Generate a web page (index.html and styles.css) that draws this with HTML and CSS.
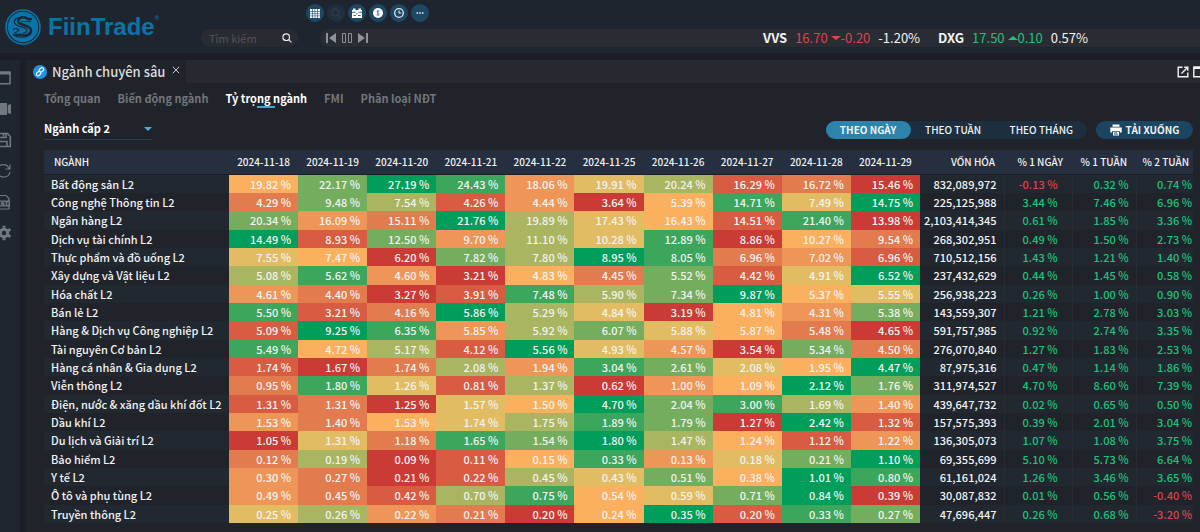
FILE: index.html
```html
<!DOCTYPE html>
<html lang="vi">
<head>
<meta charset="utf-8">
<title>FiinTrade – Ngành chuyên sâu</title>
<link rel="stylesheet" href="styles.css">
</head>
<body>
<header class="topbar">
  <a class="logo" href="#" aria-label="FiinTrade">
    <svg class="logo-mark" viewBox="0 0 36 36" aria-hidden="true">
      <circle cx="18" cy="18" r="17" fill="none" stroke="#0a73a8" stroke-width="1.6"/>
      <circle cx="18" cy="18" r="15.2" fill="#0a73a8"/>
      <g fill="none" stroke="#1b2735" stroke-linecap="round" stroke-linejoin="round">
        <path stroke-width="2.4" d="M26 10c-3 1.500-5-2.500-9-1.800-3.800.7-5 4-2.500 6 2.500 2 8 2.300 10.500 4.800 2.700 3 0 6.500-3.800 7.300-4 .8-7-1.800-10.200-.3"/>
        <path stroke-width="1.200" d="M14.500 8.500c-4.500 0-6.500 4-4 6.800 2.600 2.700 8 2.200 10.700 4.500 2 2-.2 4-2.700 4.200M8.500 20.500c2-1.800 4.500-1 5.300.8-1.500 1.800-4 1.500-5.300 4.700 4.500 3 12.500 3.500 17.500-1.500M17 12.500h8.500"/>
      </g>
    </svg>
    <span class="logo-text">FiinTrade</span><span class="logo-reg">®</span>
  </a>
  <div class="topbar-main">
    <nav class="tools" aria-label="Công cụ">
      <button class="tool" aria-label="Bảng giá"><svg viewBox="0 0 18 18"><path fill="#fff" d="M4 5h10v9H4z"/><path stroke="#1d4763" stroke-width=".6" d="M4 7.500h10M4 9.700h10M4 11.900h10M6.500 5v9M9 5v9M11.500 5v9"/></svg></button>
      <button class="tool tool-off" aria-label="Tra cứu"><svg viewBox="0 0 18 18"><circle cx="8.500" cy="8.500" r="3.500" fill="none" stroke="#2f3c4a" stroke-width="1.500"/><path stroke="#2f3c4a" stroke-width="1.500" d="M11 11l3 3"/></svg></button>
      <button class="tool" aria-label="Lịch"><svg viewBox="0 0 18 18"><path fill="#fff" d="M4 6h1V4.500h2.500V6h3V4.500H13V6h1v8H4z"/><path stroke="#1d4763" stroke-width=".8" d="M4 8.300h3.500M10.500 8.300H14M5.500 11.500h2.500M10 11.500h2.500M9 9v1.500"/></svg></button>
      <button class="tool" aria-label="Tiền tệ"><svg viewBox="0 0 18 18"><circle cx="9" cy="9" r="5" fill="#fff"/><path fill="none" stroke="#6d8494" d="M10.500 7.200c-3-1-3.500 1-1.500 1.800s1 2.800-1.500 1.600M9 6v6"/></svg></button>
      <button class="tool" aria-label="Lịch sử"><svg viewBox="0 0 18 18"><circle cx="9" cy="9" r="4.300" fill="none" stroke="#dfe8ee" stroke-width="1.300"/><path fill="none" stroke="#dfe8ee" stroke-width="1.100" d="M9 6.500V9h2.300"/></svg></button>
      <button class="tool" aria-label="Thêm"><svg viewBox="0 0 18 18"><path fill="#e6edf2" d="M5.500 8.300h1.600v1.500H5.500zM8.200 8.300h1.600v1.500H8.200zM10.900 8.300h1.600v1.500h-1.600z"/></svg></button>
    </nav>
    <div class="quote-row">
      <label class="search">
        <input type="search" placeholder="Tìm kiếm" aria-label="Tìm kiếm">
        <svg viewBox="0 0 10 10" aria-hidden="true"><circle cx="4.200" cy="4.200" r="3.300" fill="none" stroke="#e6e8ea" stroke-width="1.200"/><path stroke="#e6e8ea" stroke-width="1.200" d="M6.700 6.700L9.400 9.400"/></svg>
      </label>
      <div class="ticker">
        <div class="player">
          <button aria-label="Trước"><svg viewBox="0 0 10 12"><path fill="#8e9196" d="M0 1h2v10H0zM10 1v10L3 6z"/></svg></button>
          <button aria-label="Tạm dừng"><svg viewBox="0 0 10 12"><path fill="none" stroke="#8e9196" d="M.5 1.500h3v9h-3zM6.500 1.500h3v9h-3z"/></svg></button>
          <button aria-label="Sau"><svg viewBox="0 0 10 12"><path fill="#8e9196" d="M8 1h2v10H8zM0 1v10l7-5z"/></svg></button>
        </div>
        <div class="quote"><b>VVS</b><span class="down">16.70 <i class="arrow arrow-down"></i>-0.20</span><span>-1.20%</span></div>
        <div class="quote"><b>DXG</b><span class="up">17.50 <i class="arrow arrow-up"></i>0.10</span><span>0.57%</span></div>
      </div>
    </div>
  </div>
</header>

<div class="workspace">
  <aside class="sidebar">
    <button aria-label="Cửa sổ"><svg viewBox="0 0 20 20"><path fill="none" stroke="#74787e" stroke-width="1.500" d="M-5 4.200H10v11.500H-5z"/><path fill="#74787e" d="M-5 3.500H10.500v3H-5z"/></svg></button>
    <button aria-label="Video"><svg viewBox="0 0 20 20"><path fill="#74787e" d="M-5 4h12v12H-5zM7.700 6l3.300-1v10l-3.300-1z"/></svg></button>
    <button aria-label="Lưu"><svg viewBox="0 0 20 20"><path fill="none" stroke="#74787e" stroke-width="1.600" d="M-4 3.500H7.500L10.300 6.500V16.500H-4zM-1 3.500v4h7v-4M-1 16v-4.500h8V16M3.500 4v2.500"/></svg></button>
    <button aria-label="Tải lại"><svg viewBox="0 0 20 20"><path fill="none" stroke="#74787e" stroke-width="1.200" d="M-2 7C0 2.500 7 2.500 9 7.500M10 3.500V8H5.500M10 11C9 17 0 18-2 12"/></svg></button>
    <button aria-label="Xuất CSV"><svg viewBox="0 0 20 20"><path fill="none" stroke="#74787e" stroke-width="1.200" d="M-3 9V3.500H6L9 6.500V9M9 14v3H-3"/><path fill="#74787e" d="M-3 8.500h13v6H-3z"/><path fill="none" stroke="#1f2630" stroke-width=".8" d="M2.500 10H.5v3h2M5.500 10h-1.500v1.500h1.500V13H4M6.800 10l.9 3 .9-3"/></svg></button>
    <button aria-label="Cài đặt"><svg viewBox="0 0 20 20"><circle cx="4" cy="10" r="3.700" fill="none" stroke="#74787e" stroke-width="3"/><path stroke="#74787e" stroke-width="3" d="M4 2.800v2M4 15.200v2M7.900 7.700l2.500-1.400M7.900 12.300l2.500 1.400M-2.300 6.300L.2 7.700M-2.300 13.700l2.500-1.400"/></svg></button>
  </aside>

  <main class="panel">
    <div class="tabstrip">
      <div class="tab">
        <svg class="tab-icon" viewBox="0 0 14 14" aria-hidden="true"><circle cx="7" cy="7" r="7" fill="#2492e2"/><g fill="none" stroke="#fff" stroke-width="1.100"><rect x="5.900" y="3.200" width="5" height="3.400" rx="1.700" transform="rotate(-45 8.400 4.900)"/><rect x="3.100" y="6.900" width="5" height="3.400" rx="1.700" transform="rotate(-45 5.600 8.600)"/></g></svg>
        <h1>Ngành chuyên sâu</h1>
        <button class="tab-close" aria-label="Đóng"><svg viewBox="0 0 8 8"><path stroke="#c6c8cb" d="M.8.8l6.400 6.400M7.200.8L.8 7.200"/></svg></button>
      </div>
      <div class="tabstrip-actions">
        <button aria-label="Mở cửa sổ mới"><svg viewBox="0 0 12 12"><path fill="none" stroke="#f2f3f4" stroke-width="1.400" d="M5.500 1.200H1.200v9.600h9.600V6.500M4.500 7.500l6-6M7.200 1.200h3.600v3.600"/></svg></button>
        <button class="cut" aria-label="Phóng to"><svg viewBox="0 0 12 12"><path fill="none" stroke="#f2f3f4" stroke-width="1.400" d="M.8 1.200h10.400v9.600H.8z"/><path fill="#f2f3f4" d="M.5.500h11v2.500H.5z"/></svg></button>
      </div>
    </div>

    <div class="content">
      <nav class="subnav">
        <a href="#">Tổng quan</a>
        <a href="#">Biến động ngành</a>
        <a href="#" class="active" aria-current="page">Tỷ trọng ngành</a>
        <a href="#">FMI</a>
        <a href="#">Phân loại NĐT</a>
      </nav>

      <div class="filters">
        <div class="level">
          <select aria-label="Cấp ngành"><option>Ngành cấp 2</option></select>
          <i class="arrow arrow-down" aria-hidden="true"></i>
        </div>
        <div class="actions">
          <div class="segment" role="group" aria-label="Chu kỳ">
            <button class="on" aria-pressed="true">THEO NGÀY</button>
            <button aria-pressed="false">THEO TUẦN</button>
            <button aria-pressed="false">THEO THÁNG</button>
          </div>
          <button class="download">
            <svg viewBox="0 0 12 12" aria-hidden="true"><path fill="#fff" d="M2.500.5h7v2.300h-7zM.3 3.600h11.400v5H9.800V7H2.200v1.600H.3z"/><path fill="#fff" d="M3 7.700h6v3.800H3z"/><path stroke="#1c4561" stroke-width=".8" d="M4 8.900h3M4 10.200h4"/></svg>
            TẢI XUỐNG
          </button>
        </div>
      </div>

      <table class="heatmap">
        <colgroup>
          <col class="c-name"><col span="10"><col class="c-cap"><col class="c-day"><col class="c-week"><col class="c-week2">
        </colgroup>
        <thead>
          <tr>
            <th class="name" scope="col">NGÀNH</th>
            <th scope="col">2024-11-18</th><th scope="col">2024-11-19</th><th scope="col">2024-11-20</th><th scope="col">2024-11-21</th><th scope="col">2024-11-22</th>
            <th scope="col">2024-11-25</th><th scope="col">2024-11-26</th><th scope="col">2024-11-27</th><th scope="col">2024-11-28</th><th scope="col">2024-11-29</th>
            <th class="num" scope="col">VỐN HÓA</th><th class="num" scope="col">% 1 NGÀY</th><th class="num" scope="col">% 1 TUẦN</th><th class="num last" scope="col">% 2 TUẦN</th>
          </tr>
        </thead>
        <tbody id="rows"></tbody>
      </table>
    </div>
  </main>
</div>
<script src="table.js"></script>
</body>
</html>
```

FILE: styles.css
```css
* { box-sizing: border-box; }

body {
  margin: 0;
  min-height: 100vh;
  display: flex;
  flex-direction: column;
  gap: 7px;
  overflow-x: hidden;
  background: #1b1e27;
  color: #f2f3f4;
  font: 11px/16px "Noto Sans CJK SC", "Noto Sans", sans-serif;
}

button {
  padding: 0;
  border: 0;
  background: none;
  color: inherit;
  font: inherit;
  cursor: pointer;
}

svg { display: block; }
a { color: inherit; text-decoration: none; }

.up { color: #1cc37c; }
.down { color: #dc4450; }

.arrow {
  display: inline-block;
  border: 4px solid transparent;
}
.arrow-down { border-top-color: currentColor; border-bottom: 0; }
.arrow-up { border-bottom-color: currentColor; border-top: 0; }

/* Top bar */
.topbar {
  display: flex;
  height: 53px;
  padding-left: 5px;
  background: #1f252f;
}

.logo {
  display: flex;
  align-items: center;
  width: 196px;
  color: #0a73a8;
}
.logo-mark { width: 36px; height: 36px; margin-right: 7px; }
.logo-text { font: bold 24px/28px "Liberation Sans", Arial, sans-serif; }
.logo-reg { align-self: flex-start; padding-top: 14px; font: bold 6px/8px "Liberation Sans", Arial, sans-serif; }

.topbar-main {
  flex: 1;
  display: flex;
  flex-direction: column;
  gap: 7px;
  padding-top: 4px;
}

.tools { display: flex; gap: 3px; padding-left: 105px; }
.tool { width: 18px; height: 18px; border-radius: 50%; background: #1d4763; }
.tool-off { background: #1f2f3d; }

.quote-row { display: flex; gap: 22px; }

.search {
  display: flex;
  align-items: center;
  width: 97px;
  height: 18px;
  padding: 0 6px 0 8px;
  border-radius: 9px;
  background: #292b33;
}
.search input {
  flex: 1;
  min-width: 0;
  padding: 0;
  border: 0;
  outline: 0;
  background: none;
  color: #d0d2d5;
  font: inherit;
}
.search input::placeholder { color: #50545b; }
.search svg { width: 10px; height: 10px; }

.ticker {
  flex: 1;
  display: flex;
  align-items: center;
  gap: 18px;
  height: 18px;
  padding: 0 112px 0 6px;
  border-radius: 9px 0 0 9px;
  background: #2a2c34;
  font-size: 13px;
}
.player { display: flex; gap: 6px; margin-right: auto; }
.player svg { width: 10px; height: 12px; }
.quote { display: flex; gap: 8px; white-space: nowrap; }
.quote .arrow { border-left-width: 5px; border-right-width: 5px; vertical-align: 3px; }

/* Workspace */
.workspace { flex: 1; display: flex; gap: 6px; }

.sidebar {
  display: flex;
  flex-direction: column;
  gap: 11px;
  width: 20px;
  padding-top: 8px;
  background: #1f2630;
}
.sidebar svg { width: 20px; height: 20px; }

.panel { flex: 1; min-width: 0; background: #20232a; }

.tabstrip { display: flex; height: 23px; background: #272930; }
.tab {
  display: flex;
  align-items: center;
  gap: 5px;
  padding: 0 6px 0 7px;
  background: #20232a;
}
.tab-icon { width: 14px; height: 14px; }
.tab h1 { margin: 0; color: #dcdddf; font-size: 13px; font-weight: 500; }
.tab-close { align-self: flex-start; padding: 6px 0 0 2px; }
.tab-close svg { width: 8px; height: 8px; }

.tabstrip-actions {
  display: flex;
  align-items: center;
  gap: 4px;
  margin-left: auto;
}
.tabstrip-actions svg { width: 12px; height: 12px; }
.tabstrip-actions .cut { width: 7px; overflow: hidden; }

.content { padding: 7px 7px 9px 18px; }

.subnav {
  display: flex;
  gap: 17px;
  color: #73767c;
  font-weight: bold;
}
.subnav a {
  display: flex;
  flex-direction: column;
  align-items: center;
}
.subnav a::after { content: ""; width: 18px; height: 2px; }
.subnav .active { color: #fff; }
.subnav .active::after { background: #3fa4d6; }

.filters {
  display: flex;
  justify-content: space-between;
  align-items: center;
  padding: 11px 0 10px;
}

.level {
  display: flex;
  align-items: center;
  width: 108px;
  border-bottom: 1px solid #203f50;
  color: #45b0e0;
}
.level select {
  flex: 1;
  height: 20px;
  padding: 0 0 2px;
  border: 0;
  outline: 0;
  appearance: none;
  background: none;
  color: #fff;
  font: bold 11px/16px "Noto Sans CJK SC", "Noto Sans", sans-serif;
}

.actions { display: flex; gap: 9px; }
.segment { display: flex; border-radius: 9px; background: #1d2f3f; }
.segment button {
  min-width: 85px;
  height: 18px;
  padding: 0 14px;
  border-radius: 9px;
  font-size: 10px;
  font-weight: 500;
}
.segment .on { background: #2c83ab; font-weight: bold; }
.download {
  display: flex;
  align-items: center;
  justify-content: center;
  gap: 4px;
  width: 97px;
  height: 18px;
  border-radius: 9px;
  background: #1c4561;
  font-size: 10px;
  font-weight: bold;
}
.download svg { width: 12px; height: 12px; }

/* Heat map table */
.heatmap {
  width: 100%;
  table-layout: fixed;
  border-collapse: collapse;
  white-space: nowrap;
}
.c-name { width: 185px; }
.c-cap { width: 84px; }
.c-day { width: 68px; }
.c-week { width: 64px; }
.c-week2 { width: 57px; }

.heatmap thead th {
  height: 24px;
  padding: 0;
  border-bottom: 1px solid #1b1e27;
  background: #252f40;
  font-size: 10px;
  font-weight: 500;
}
.heatmap thead .name { padding-left: 10px; text-align: left; }
.heatmap thead .num { padding-right: 9px; text-align: right; }
.heatmap thead .last { padding-right: 4px; }

.heatmap tbody tr:nth-child(odd) { background: #222830; }
.heatmap tbody th,
.heatmap tbody td {
  height: 18px;
  padding: 0 7px;
  text-align: right;
  line-height: 18px;
  font-weight: 500;
}
.heatmap tbody tr:nth-child(3n) td { height: 19px; }
.heatmap tbody th { text-align: left; }
.heatmap tbody .cap { padding-left: 0; }
.heatmap .change { border-left: 1px solid #292c34; }
.heatmap tbody .day { padding-right: 14px; }
.heatmap tbody .week2 { padding-right: 1px; }

.heat-1 { background: #cb3b35; }
.heat-2 { background: #d85c42; }
.heat-3 { background: #e27b4e; }
.heat-4 { background: #ee9658; }
.heat-5 { background: #fab05f; }
.heat-6 { background: #e2bc63; }
.heat-7 { background: #a9b561; }
.heat-8 { background: #74ad5e; }
.heat-9 { background: #3ca65c; }
.heat-10 { background: #009e5a; }
```

FILE: table.js
```js
// Each row: sector, ten daily weights (%), market cap, change over 1 day, 1 week, 2 weeks (%).
const sectors = [
  ["Bất động sản L2", [19.82, 22.17, 27.19, 24.43, 18.06, 19.91, 20.24, 16.29, 16.72, 15.46], 832089972, -0.13, 0.32, 0.74],
  ["Công nghệ Thông tin L2", [4.29, 9.48, 7.54, 4.26, 4.44, 3.64, 5.39, 14.71, 7.49, 14.75], 225125988, 3.44, 7.46, 6.96],
  ["Ngân hàng L2", [20.34, 16.09, 15.11, 21.76, 19.89, 17.43, 16.43, 14.51, 21.40, 13.98], 2103414345, 0.61, 1.85, 3.36],
  ["Dịch vụ tài chính L2", [14.49, 8.93, 12.50, 9.70, 11.10, 10.28, 12.89, 8.86, 10.27, 9.54], 268302951, 0.49, 1.50, 2.73],
  ["Thực phẩm và đồ uống L2", [7.55, 7.47, 6.20, 7.82, 7.80, 8.95, 8.05, 6.962, 7.02, 6.958], 710512156, 1.43, 1.21, 1.40],
  ["Xây dựng và Vật liệu L2", [5.08, 5.62, 4.60, 3.21, 4.83, 4.45, 5.52, 4.42, 4.91, 6.52], 237432629, 0.44, 1.45, 0.58],
  ["Hóa chất L2", [4.61, 4.40, 3.27, 3.91, 7.48, 5.90, 7.34, 9.87, 5.37, 5.55], 256938223, 0.26, 1.00, 0.90],
  ["Bán lẻ L2", [5.50, 3.21, 4.16, 5.86, 5.29, 4.84, 3.19, 4.81, 4.31, 5.38], 143559307, 1.21, 2.78, 3.03],
  ["Hàng & Dịch vụ Công nghiệp L2", [5.09, 9.25, 6.35, 5.85, 5.92, 6.07, 5.88, 5.87, 5.48, 4.65], 591757985, 0.92, 2.74, 3.35],
  ["Tài nguyên Cơ bản L2", [5.49, 4.72, 5.17, 4.12, 5.56, 4.93, 4.57, 3.54, 5.34, 4.50], 276070840, 1.27, 1.83, 2.53],
  ["Hàng cá nhân & Gia dụng L2", [1.738, 1.67, 1.742, 2.082, 1.94, 3.04, 2.61, 2.078, 1.95, 4.47], 87975316, 0.47, 1.14, 1.86],
  ["Viễn thông L2", [0.95, 1.80, 1.26, 0.81, 1.37, 0.62, 1.00, 1.09, 2.12, 1.76], 311974527, 4.70, 8.60, 7.39],
  ["Điện, nước & xăng dầu khí đốt L2", [1.308, 1.312, 1.25, 1.57, 1.50, 4.70, 2.04, 3.00, 1.69, 1.40], 439647732, 0.02, 0.65, 0.50],
  ["Dầu khí L2", [1.528, 1.40, 1.532, 1.74, 1.75, 1.89, 1.79, 1.27, 2.42, 1.32], 157575393, 0.39, 2.01, 3.04],
  ["Du lịch và Giải trí L2", [1.05, 1.31, 1.18, 1.65, 1.54, 1.80, 1.47, 1.24, 1.12, 1.22], 136305073, 1.07, 1.08, 3.75],
  ["Bảo hiểm L2", [0.12, 0.19, 0.09, 0.11, 0.15, 0.33, 0.13, 0.18, 0.21, 1.10], 69355699, 5.10, 5.73, 6.64],
  ["Y tế L2", [0.30, 0.27, 0.21, 0.22, 0.45, 0.43, 0.51, 0.38, 1.01, 0.80], 61161024, 1.26, 3.46, 3.65],
  ["Ô tô và phụ tùng L2", [0.49, 0.45, 0.42, 0.70, 0.75, 0.54, 0.59, 0.71, 0.84, 0.39], 30087832, 0.01, 0.56, -0.40],
  ["Truyền thông L2", [0.25, 0.26, 0.22, 0.21, 0.198, 0.24, 0.35, 0.202, 0.33, 0.27], 47696447, 0.26, 0.68, -3.20]
];

const percent = value => value.toFixed(2) + " %";

function addCell(row, tag, text, className) {
  const cell = document.createElement(tag);
  cell.textContent = text;
  if (className) cell.className = className;
  row.append(cell);
  return cell;
}

const body = document.getElementById("rows");
for (const [name, weights, cap, day, week, week2] of sectors) {
  const row = body.insertRow();
  addCell(row, "th", name).scope = "row";
  // The colour of a weight is its rank within the sector's own ten days.
  const sorted = [...weights].sort((a, b) => a - b);
  for (const weight of weights) {
    addCell(row, "td", percent(weight), "heat-" + (sorted.indexOf(weight) + 1));
  }
  addCell(row, "td", cap.toLocaleString("en-US"), "cap");
  for (const [value, column] of [[day, "day"], [week, "week"], [week2, "week2"]]) {
    addCell(row, "td", percent(value), "change " + column + (value < 0 ? " down" : " up"));
  }
}
```
